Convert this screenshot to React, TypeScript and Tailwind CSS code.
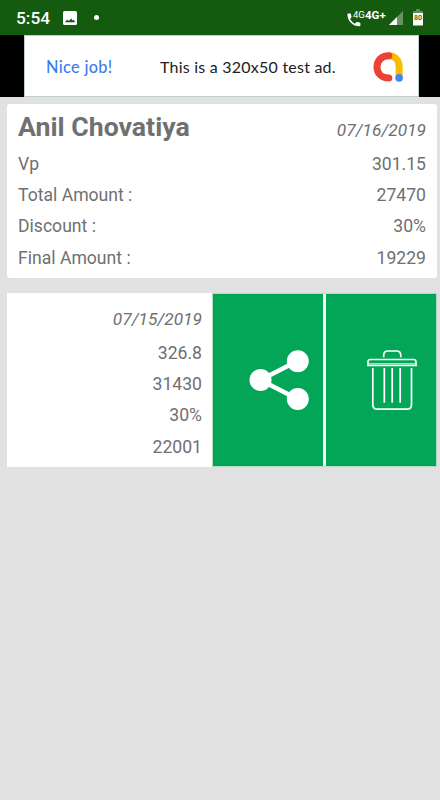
import React from "react";

const PhoneIcon = () => (
  <svg className="h-[14px] w-[14px]" viewBox="0 0 14 14" fill="#fff">
    <path d="M0.4 1.2Q0.4.4 1.2.4H3.2Q3.9.4 4 1.1Q4.1 2.6 4.5 3.7Q4.6 4.2 4.3 4.6L3 5.9Q4.8 9.1 7.9 10.7L9.2 9.3Q9.6 9 10.1 9.1Q11.4 9.5 12.7 9.6Q13.4 9.7 13.4 10.4V12.4Q13.4 13.3 12.6 13.3C5.7 13.3.4 8 .4 1.2Z" />
  </svg>
);

const AdLogo = () => (
  <svg className="h-[32px] w-[32px]" viewBox="0 0 32 32" fill="none">
    <path d="M16.5 4.7C23 4.7 27.1 9.4 27.1 15.5V26" stroke="#fbbc04" strokeWidth="7" />
    <path d="M16.8 4.7C9.8 4.6 5 9.5 5 16C5 22.5 9.8 27 16.8 27" stroke="#ea4335" strokeWidth="7" strokeLinecap="round" />
    <circle cx="27.1" cy="26.9" r="3.8" fill="#4285f4" />
  </svg>
);

const ShareIcon = () => (
  <svg className="h-[62px] w-[60px]" viewBox="0 0 60 62" fill="#fff">
    <path d="M48.5 12L11.5 31L48.5 50" stroke="#fff" strokeWidth="4.6" fill="none" />
    <circle cx="11.5" cy="31" r="11" />
    <circle cx="48.8" cy="12.2" r="11" />
    <circle cx="48.8" cy="50" r="11" />
  </svg>
);

const TrashIcon = () => (
  <svg className="h-[60px] w-[50px]" viewBox="0 0 50 60" fill="none" stroke="#fff" strokeWidth="1.7">
    <path d="M16.7 7.3V5.4Q16.7 1 21 1H29.5Q33.8 1 33.8 5.4V7.3" />
    <path d="M1 15.3V12Q1 9.5 3.5 9.5H46.5Q49 9.5 49 12V15.3Z" />
    <path d="M1 13.6H49" strokeWidth="1" strokeOpacity=".7" />
    <path d="M5.8 18V54.5Q5.8 59.2 10.5 59.2H39.8Q44.5 59.2 44.5 54.5V18" />
    <path d="M17.3 18V52.8M25.2 18V52.8M33.2 18V52.8" />
  </svg>
);

const labels = ["Vp", "Total Amount :", "Discount :", "Final Amount :"];

function Values({ date, values }: { date: string; values: string[] }) {
  return (
    <div className="flex flex-col items-end">
      <div className="h-[32px] pt-[11px] text-[17.3px] leading-[31px] italic">{date}</div>
      <div className="mt-[12.6px] flex flex-col items-end">
        {values.map((v) => (
          <div key={v} className="h-[31.4px] leading-[31px]">{v}</div>
        ))}
      </div>
    </div>
  );
}

export default function App() {
  return (
    <div className="flex h-[800px] w-[440px] flex-col overflow-hidden bg-[#e1e1e1] font-['Roboto',sans-serif]">
      <header className="flex h-[35px] shrink-0 items-center bg-[#145b10] text-white">
        <span className="ml-4 w-[34px] text-[17.3px] leading-[36px] font-medium whitespace-nowrap">5:54</span>
        <svg className="ml-[13px] h-[14px] w-[14px]" viewBox="0 0 14 14">
          <rect width="14" height="14" rx="1.5" fill="#fff" />
          <path d="M2 11.3L4.2 8.6L5.8 10.1L8.2 7.4L9.7 9.5L10.7 8.7L12.2 11.3Z" fill="#145b10" />
        </svg>
        <span className="ml-[17px] h-[5px] w-[5px] rounded-full bg-white" />
        <div className="mr-[17px] ml-auto flex items-center">
          <div className="mt-1"><PhoneIcon /></div>
          <span className="-ml-[8px] mb-[6px] w-[12px] text-[9.5px] leading-[10px] whitespace-nowrap">4G</span>
          <span className="mb-[6px] w-[21px] text-[11.5px] leading-[12px] font-bold whitespace-nowrap">4G+</span>
          <svg className="ml-[3px] h-[14px] w-[14px]" viewBox="0 0 14 14">
            <path d="M14 0V14H0Z" fill="#669564" />
            <path d="M8 6V14H0Z" fill="#fff" />
          </svg>
          <svg className="ml-[10px] h-[17px] w-[10px]" viewBox="0 0 10 17">
            <path d="M3 0H7V2H10V5H0V2H3Z" fill="#5c8e59" />
            <path d="M0 4H10V16Q10 16.5 9.5 16.5H.5Q0 16.5 0 16Z" fill="#fff" />
            <text x="5" y="11" textAnchor="middle" fontSize="7" fontWeight="500" fontFamily="Roboto" fill="#145b10">80</text>
          </svg>
        </div>
      </header>

      <section className="flex h-[62px] shrink-0 bg-black pr-[21px] pl-[24px]">
        <div className="flex h-full w-full items-center border border-[#c0cdd3] bg-white font-['Lato',sans-serif] text-[16px]">
          <span className="ml-[21px] w-[114px] pt-[2px] text-[16.3px] font-medium tracking-[0.35px] whitespace-nowrap text-[#3b7ded]">Nice job!</span>
          <span className="w-[176px] pt-[2px] tracking-[0.23px] whitespace-nowrap text-[#202124]">This is a 320x50 test ad.</span>
          <div className="mr-[14px] ml-auto pt-[1px]"><AdLogo /></div>
        </div>
      </section>

      <main className="flex flex-col gap-[15px] pt-[7px] pr-[3px] pl-[7px] text-[17.6px] text-[#707070]">
        <article className="flex h-[174px] justify-between rounded-[3px] bg-white pr-[11px] pl-[11px]">
          <div className="flex flex-col">
            <h1 className="h-[44.6px] text-[26.7px] leading-[46px] font-bold whitespace-nowrap text-[#707070]">Anil Chovatiya</h1>
            {labels.map((l) => (
              <div key={l} className="h-[31.4px] leading-[31px]">{l}</div>
            ))}
          </div>
          <Values date="07/16/2019" values={["301.15", "27470", "30%", "19229"]} />
        </article>

        <article className="flex h-[174px] w-[430px]">
          <div className="flex w-[205px] justify-end bg-white pr-[10px]">
            <Values date="07/15/2019" values={["326.8", "31430", "30%", "22001"]} />
          </div>
          <div className="flex grow justify-between border border-[#b4d9c3] bg-[#f4fbf6]">
            <button className="flex w-[110px] items-center justify-end bg-[#03a657] pr-[14px]" aria-label="Share">
              <ShareIcon />
            </button>
            <button className="flex w-[110px] items-center justify-end bg-[#03a657] pr-[19px]" aria-label="Delete">
              <TrashIcon />
            </button>
          </div>
        </article>
      </main>
    </div>
  );
}
